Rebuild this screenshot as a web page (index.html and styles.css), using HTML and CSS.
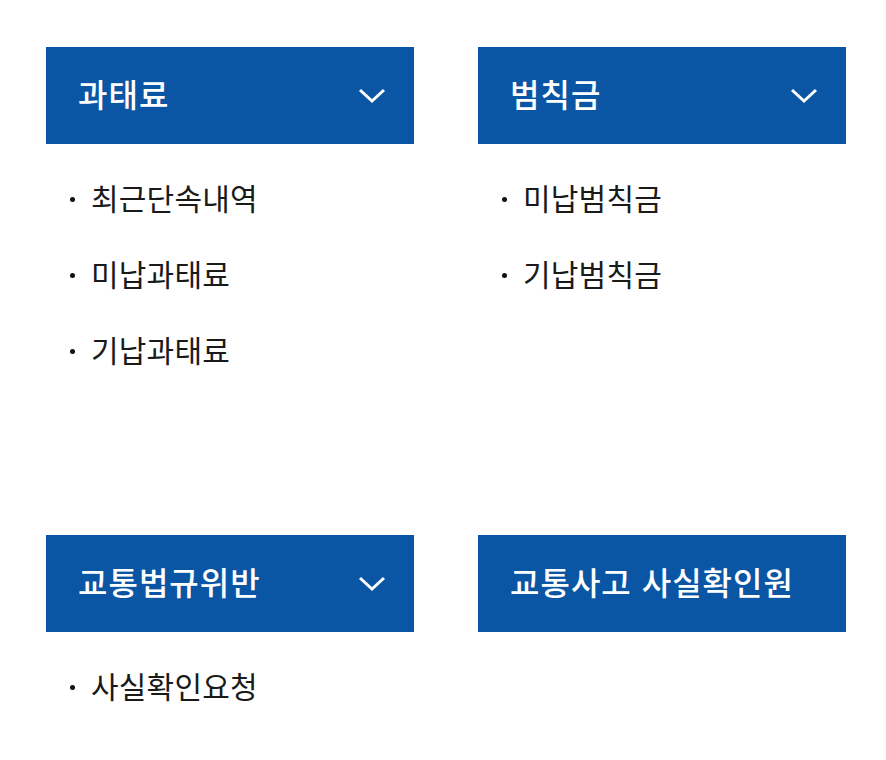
FILE: index.html
```html
<!DOCTYPE html>
<html lang="ko">
<head>
  <meta charset="UTF-8">
  <title>단속 조회</title>
  <link rel="stylesheet" href="styles.css">
</head>
<body>
  <div class="menu-grid">
    <div class="menu-card">
      <div class="menu-head">
        <span>과태료</span>
        <svg class="chevron" viewBox="0 0 28 16"><path d="M2 2 L14 13 L26 2" /></svg>
      </div>
      <ul class="sub-list">
        <li>최근단속내역</li>
        <li>미납과태료</li>
        <li>기납과태료</li>
      </ul>
    </div>
    <div class="menu-card">
      <div class="menu-head">
        <span>범칙금</span>
        <svg class="chevron" viewBox="0 0 28 16"><path d="M2 2 L14 13 L26 2" /></svg>
      </div>
      <ul class="sub-list">
        <li>미납범칙금</li>
        <li>기납범칙금</li>
      </ul>
    </div>
    <div class="menu-card">
      <div class="menu-head">
        <span>교통법규위반</span>
        <svg class="chevron" viewBox="0 0 28 16"><path d="M2 2 L14 13 L26 2" /></svg>
      </div>
      <ul class="sub-list">
        <li>사실확인요청</li>
      </ul>
    </div>
    <div class="menu-card">
      <div class="menu-head">
        <span>교통사고 사실확인원</span>
      </div>
    </div>
  </div>
</body>
</html>
```

FILE: styles.css
```css
* {
  box-sizing: border-box;
}

html, body {
  margin: 0;
  padding: 0;
  background: #fff;
  font-family: "Noto Sans CJK KR", "Noto Sans", sans-serif;
  color: #1a1a1a;
}

body {
  padding: 47px 40px 0 46px;
}

.menu-grid {
  display: grid;
  grid-template-columns: 368px 368px;
  column-gap: 64px;
  row-gap: 146px;
  grid-template-rows: 342px auto;
}

.menu-head {
  height: 97px;
  background: #0a56a5;
  color: #fff;
  display: flex;
  align-items: center;
  justify-content: space-between;
  padding: 0 28px 0 32px;
  font-size: 32px;
  font-weight: 500;
  letter-spacing: 1px;
}

.menu-head span {
  margin-top: -5px;
}

.chevron {
  width: 28px;
  height: 16px;
  fill: none;
  stroke: #fff;
  stroke-width: 3;
}

.sub-list {
  list-style: none;
  margin: 0;
  padding: 17px 0 0 0;
}

.sub-list li {
  height: 76px;
  display: flex;
  align-items: center;
  padding: 0 0 4px 45px;
  position: relative;
  font-size: 30px;
  font-weight: 400;
  letter-spacing: 0.2px;
}

.sub-list li::before {
  content: "";
  position: absolute;
  left: 24px;
  top: 36px;
  width: 5px;
  height: 5px;
  border-radius: 50%;
  background: #111;
}
```
